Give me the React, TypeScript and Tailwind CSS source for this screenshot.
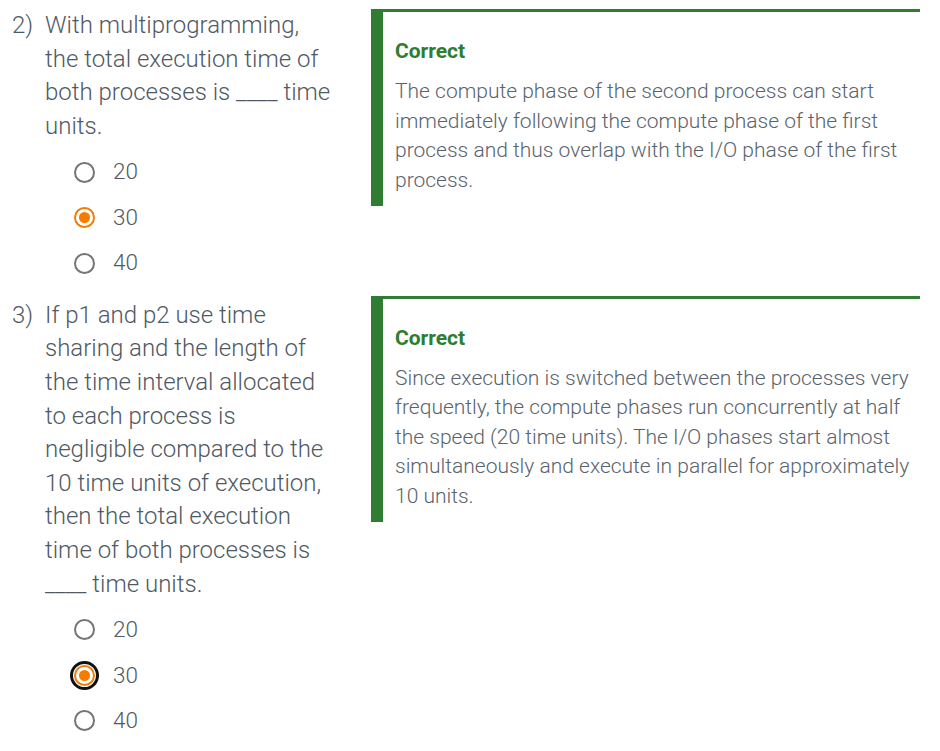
import React from "react"

type Question = {
  num: string
  text: React.ReactNode
  options: string[]
  chosen: number
  focused?: boolean
  boxTop: string
  explanation: string
}

const questions: Question[] = [
  {
    num: "2)",
    text: <>With multiprogramming, the total execution time of both processes is ____ time units.</>,
    options: ["20", "30", "40"],
    chosen: 1,
    boxTop: "mt-[9px]",
    explanation:
      "The compute phase of the second process can start immediately following the compute phase of the first process and thus overlap with the I/O phase of the first process.",
  },
  {
    num: "3)",
    text: (
      <>
        If p1 and p2 use time sharing and the length of the time interval allocated to each process is negligible compared to the 10 time units of execution, then the total execution time of both processes is ____ time units.
      </>
    ),
    options: ["20", "30", "40"],
    chosen: 1,
    focused: true,
    boxTop: "mt-[6px]",
    explanation:
      "Since execution is switched between the processes very frequently, the compute phases run concurrently at half the speed (20 time units). The I/O phases start almost simultaneously and execute in parallel for approximately 10 units.",
  },
]

function Radio({ checked, focused }: { checked: boolean; focused?: boolean }) {
  if (!checked) {
    return <span className="block w-[21px] h-[21px] rounded-full border-[2.5px] border-[#757575] bg-white" />
  }
  return (
    <span className={`flex items-center justify-center w-[21px] h-[21px] rounded-full border-[2.5px] border-[#f57c00] bg-white ${focused ? "outline outline-[3px] outline-[#111] outline-offset-[1px]" : ""}`}>
      <span className="block w-[11px] h-[11px] rounded-full bg-[#f57c00]" />
    </span>
  )
}

function QuestionBlock({ q }: { q: Question }) {
  return (
    <div className="flex">
      <div className="w-[371px] shrink-0 flex pt-[9px] text-[24px] leading-[33.6px] text-[#4f5963] font-light">
        <div className="w-[45px] shrink-0 pl-[12px]">{q.num}</div>
        <div className="w-[292px]">
          <div>{q.text}</div>
          <div className="flex flex-col mt-[6px]">
            {q.options.map((o, i) => (
              <label key={o} className="flex items-center h-[45.5px] pl-[29px]">
                <Radio checked={i === q.chosen} focused={q.focused} />
                <span className="ml-[18px] text-[22.5px]">{o}</span>
              </label>
            ))}
          </div>
        </div>
      </div>
      <div className={`w-[549px] self-start ${q.boxTop} border-t-[3px] border-l-[12px] border-[#2e7d32] pl-[12px] pr-[8px] pt-[26px] pb-[11px]`}>
        <div className="text-[21px] leading-[26px] font-bold text-[#2e7d32]">Correct</div>
        <div className="mt-[13px] text-[21px] leading-[29.5px] text-[#59636d] font-light">{q.explanation}</div>
      </div>
    </div>
  )
}

export default function App() {
  return (
    <div className="bg-white w-[940px] min-h-[751px]" style={{ fontFamily: "Roboto, 'Noto Sans', sans-serif" }}>
      <div className="flex flex-col gap-[4px]">
        {questions.map((q) => (
          <QuestionBlock key={q.num} q={q} />
        ))}
      </div>
    </div>
  )
}
